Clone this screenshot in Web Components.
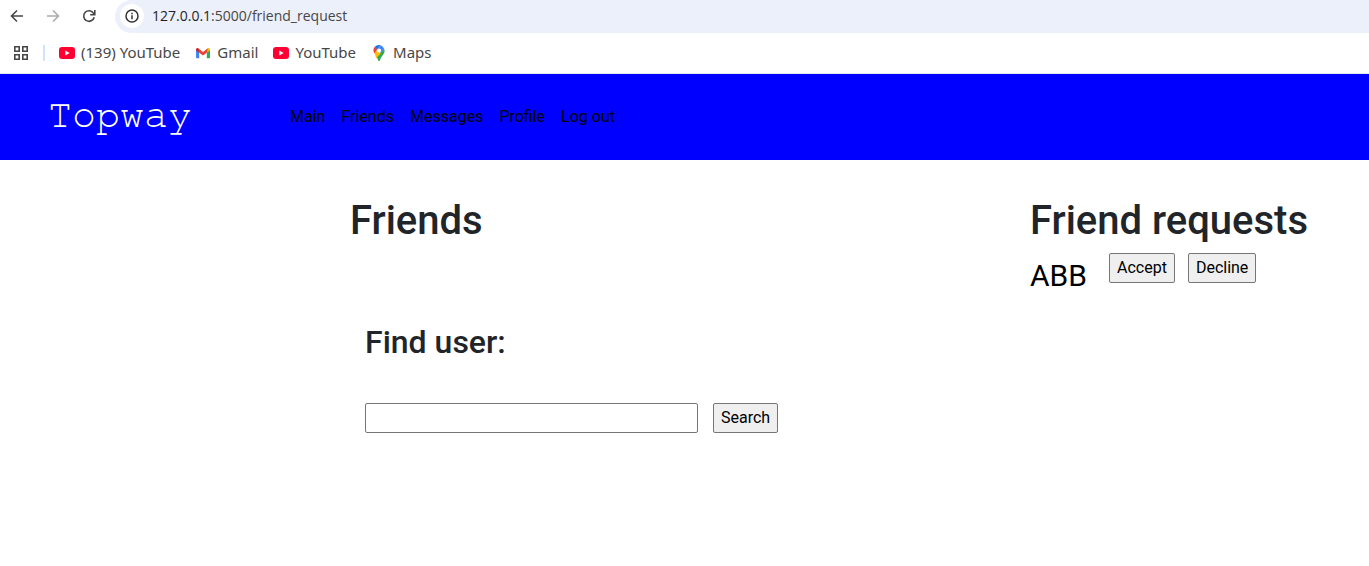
<!DOCTYPE html>
<html lang="en">
<head>
<meta charset="utf-8">
<title>Topway</title>
<style>
  body { margin: 0; background: #fff; color: #212529; font: 16px/24px Roboto, sans-serif; }
</style>
</head>
<body>
<browser-toolbar></browser-toolbar>
<bookmarks-bar>
  <bookmark-link icon="youtube">(139) YouTube</bookmark-link>
  <bookmark-link icon="gmail">Gmail</bookmark-link>
  <bookmark-link icon="youtube">YouTube</bookmark-link>
  <bookmark-link icon="maps">Maps</bookmark-link>
</bookmarks-bar>
<site-header>Topway</site-header>
<friends-page>
  <friend-request slot="requests">ABB</friend-request>
</friends-page>

<script>
function define(name, markup) {
  const template = document.createElement('template');
  template.innerHTML = markup;
  customElements.define(name, class extends HTMLElement {
    constructor() {
      super();
      this.attachShadow({ mode: 'open' }).append(template.content.cloneNode(true));
    }
  });
}

define('action-button', `
<style>
  :host { display: block; }
  button { display: block; box-sizing: border-box; height: 30px; margin: 0; padding: 0 7px; border: 1px solid #767676; border-radius: 2px; background: #efefef; color: #000; font: inherit; }
</style>
<button type="button"><slot></slot></button>`);

define('browser-toolbar', `
<style>
  :host { display: flex; align-items: center; height: 33px; background: #fff; font: 14px/20px "Open Sans", "Noto Sans", sans-serif; }
  nav { display: flex; gap: 20px; padding: 0 18px 0 9px; }
  button { display: block; width: 16px; height: 16px; padding: 0; border: 0; background: none; color: #474747; }
  button:disabled { color: #acacac; }
  svg { display: block; width: 16px; height: 16px; }
  nav, .address { box-sizing: border-box; padding-bottom: 1px; }
  .address { flex: 1; display: flex; align-items: center; gap: 8px; height: 33px; padding-left: 5px; background: #ecf0fa; border-radius: 17px 0 0 17px; color: #1f1f1f; }
  .info { display: flex; align-items: center; justify-content: center; width: 24px; height: 24px; border-radius: 12px; background: #fff; }
  .path { color: #474747; }
</style>
<nav aria-label="Browser">
  <button aria-label="Back"><svg viewBox="0 0 16 16" fill="none" stroke="currentColor" stroke-width="1.6"><path d="M14 8H3M8 2.5 2.5 8 8 13.500"/></svg></button>
  <button aria-label="Forward" disabled><svg viewBox="0 0 16 16" fill="none" stroke="currentColor" stroke-width="1.600"><path d="M2 8h11M8 2.500 13.500 8 8 13.500"/></svg></button>
  <button aria-label="Reload"><svg viewBox="0 0 16 16" fill="none" stroke="currentColor" stroke-width="1.600"><path d="M13.200 9.200A5.300 5.300 0 1 1 12.600 5.300L13.600 6.500M13.800 2v4.700H9.200"/></svg></button>
</nav>
<div class="address">
  <span class="info"><svg viewBox="0 0 16 16" fill="none" stroke="#333" stroke-width="1.500"><circle cx="8" cy="8" r="6"/><path d="M8 7.200v4M8 4.700v1.500"/></svg></span>
  <span>127.0.0.1<span class="path">:5000/friend_request</span></span>
</div>`);

define('bookmarks-bar', `
<style>
  :host { display: flex; align-items: center; box-sizing: border-box; height: 41px; padding: 0 0 1px 13px; border-bottom: 1px solid #e4e7ed; background: #fff; color: #474747; font: 15px/20px "Noto Sans", sans-serif; }
  button { display: block; width: 16px; height: 16px; padding: 0; border: 0; background: none; color: #474747; }
  svg { display: block; width: 16px; height: 16px; }
  .rule { width: 2px; height: 16px; margin: 0 14px; background: #d3e3fd; }
  nav { display: flex; gap: 15px; }
</style>
<button aria-label="Apps"><svg viewBox="0 0 16 16" fill="none" stroke="currentColor" stroke-width="1.600"><path d="M1.800 1.800h4.400v4.400H1.800zM9.800 1.800h4.400v4.400H9.800zM1.800 9.800h4.400v4.400H1.800zM9.800 9.800h4.400v4.400H9.800z"/></svg></button>
<span class="rule"></span>
<nav aria-label="Bookmarks"><slot></slot></nav>`);

const bookmarkIcons = {
  youtube: '<rect y="2" width="16" height="12" rx="3" fill="#ff0033"/><path d="M6.300 5.500v5L10.700 8z" fill="#fff"/>',
  gmail: '<path fill="#4285f4" d="M1 4v8.500q0 .8.800.8h2.400V6z"/><path fill="#34a853" d="M15 4v8.500q0 .8-.8.8h-2.400V6z"/><path fill="#c5221f" d="M1 4.500v.700L4.200 7.800V4.500L3.200 3.200Q1.300 2.300 1 4.500z"/><path fill="#fbbc04" d="M15 4.500v.700l-3.200 2.600V4.500l1-1.300q1.900-.9 2.200 1.300z"/><path fill="#ea4335" d="M3.200 3.200 8 6.900l4.800-3.700-1 4.600L8 10.600 4.200 7.800z"/>',
  maps: '<path fill="#34a853" d="M13.300 4.200q.9 3-1 5.200Q9.700 12 8.900 15.200 8 17 7.100 15.200 6.700 13 5 10.900z"/><path fill="#fbbc04" d="M3.500 8.500 6.200 5.300l3.600 3.200L5 13.200Q4.600 10.300 3.500 8.500z"/><path fill="#ea4335" d="M3.800 1.800 6.500 4.200 3.500 8.500Q1.200 4.800 3.800 1.800z"/><path fill="#1a73e8" d="M3.800 1.800Q6-.6 9.600.2L6.200 4.400z"/><path fill="#4285f4" d="M9.600.2q2.700 1 3.700 4L9.800 7.600 6.200 4.400z"/><circle cx="8" cy="5.500" r="2.100" fill="#fff"/>'
};

customElements.define('bookmark-link', class extends HTMLElement {
  constructor() {
    super();
    this.attachShadow({ mode: 'open' }).innerHTML = `
<style>
  :host { display: block; }
  a { display: flex; align-items: center; gap: 6px; color: inherit; text-decoration: none; white-space: nowrap; }
  svg { display: block; width: 16px; height: 16px; }
  span { padding-bottom: 2px; }
</style>
<a href="#"><svg viewBox="0 0 16 16" aria-hidden="true">${bookmarkIcons[this.getAttribute('icon')]}</svg><span><slot></slot></span></a>`;
  }
});

define('site-header', `
<style>
  :host { display: flex; align-items: center; box-sizing: border-box; height: 86px; padding: 0 48px; background: #00f; }
  .brand { width: 242px; padding-bottom: 4px; color: #fff; font: 40px/48px FreeMono, "Courier New", "Liberation Mono", monospace; text-decoration: none; }
  nav { display: flex; gap: 16px; }
  nav a { color: #000; text-decoration: none; }
</style>
<a class="brand" href="#"><slot></slot></a>
<nav aria-label="Main">
  <a href="#">Main</a><a href="#">Friends</a><a href="#">Messages</a><a href="#">Profile</a><a href="#">Log out</a>
</nav>`);

define('friend-request', `
<style>
  :host { display: flex; align-items: flex-start; color: #000; }
  .name { width: 79px; font-size: 30px; line-height: 46px; }
  .actions { display: flex; gap: 13px; }
</style>
<span class="name"><slot></slot></span>
<span class="actions"><action-button>Accept</action-button><action-button>Decline</action-button></span>`);

define('user-search', `
<style>
  :host { display: block; }
  h2 { margin: 0 0 42px; font-size: 32px; line-height: 38px; font-weight: 500; }
  form { display: flex; gap: 15px; }
  input { box-sizing: border-box; width: 333px; height: 30px; margin: 0; padding: 1px 2px; border: 1px solid #767676; border-radius: 2px; background: #fff; color: #000; font: inherit; }
</style>
<h2><label for="user">Find user:</label></h2>
<form><input id="user" type="text"><action-button>Search</action-button></form>`);

define('friends-page', `
<style>
  :host { display: grid; grid-template-columns: 1fr 339px; padding: 37px 0 0 350px; }
  h1 { margin: 0 0 8px; font-size: 40px; line-height: 48px; font-weight: 500; }
  user-search { padding: 70px 15px 0; }
</style>
<main><h1>Friends</h1><user-search></user-search></main>
<aside><h1>Friend requests</h1><slot name="requests"></slot></aside>`);
</script>
</body>
</html>
